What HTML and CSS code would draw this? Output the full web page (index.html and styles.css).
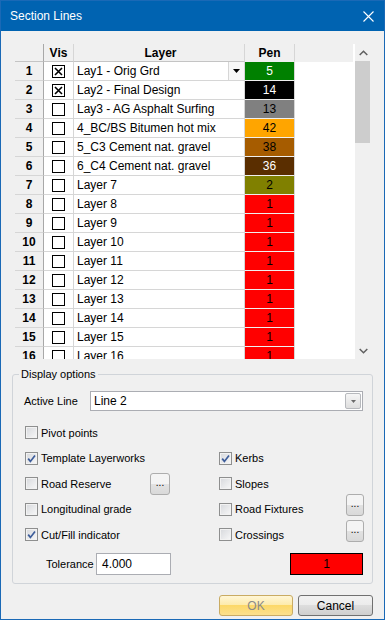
FILE: index.html
```html
<!DOCTYPE html>
<html>
<head>
  <title>Section Lines</title>
  <link rel="stylesheet" href="styles.css">
</head>
<body>
  <div class="window">
    <div class="titlebar">
      <span class="title">Section Lines</span>
      <svg class="close" width="11" height="11" viewBox="0 0 11 11"><path d="M0.5 0.5L10.5 10.5M10.5 0.5L0.5 10.5" stroke="#fff" stroke-width="1.1" fill="none"/></svg>
    </div>

    <div class="content">
      <div class="grid">
        <div class="grid-view">
          <div class="row head">
            <div class="num"></div>
            <div class="vis">Vis</div>
            <div class="layer">Layer</div>
            <div class="pen">Pen</div>
            <div class="rest"></div>
          </div>
          <div class="row">
            <div class="num">1</div>
            <div class="vis"><span class="box"><svg width="11" height="11" viewBox="0 0 11 11"><path d="M2 2L9 9M9 2L2 9" stroke="#000" stroke-width="1.6"/></svg></span></div>
            <div class="layer editing"><span class="cell-text">Lay1 - Orig Grd</span><span class="cell-btn"><svg width="7" height="4" viewBox="0 0 7 4"><path d="M0 0H7L3.5 4Z" fill="#000"/></svg></span></div>
            <div class="pen light" style="background:#008000">5</div>
            <div class="rest"></div>
          </div>
          <div class="row">
            <div class="num">2</div>
            <div class="vis"><span class="box"><svg width="11" height="11" viewBox="0 0 11 11"><path d="M2 2L9 9M9 2L2 9" stroke="#000" stroke-width="1.6"/></svg></span></div>
            <div class="layer">Lay2 - Final Design</div>
            <div class="pen light" style="background:#000000">14</div>
            <div class="rest"></div>
          </div>
          <div class="row">
            <div class="num">3</div>
            <div class="vis"><span class="box"></span></div>
            <div class="layer">Lay3 - AG Asphalt Surfing</div>
            <div class="pen" style="background:#808080">13</div>
            <div class="rest"></div>
          </div>
          <div class="row">
            <div class="num">4</div>
            <div class="vis"><span class="box"></span></div>
            <div class="layer">4_BC/BS Bitumen hot mix</div>
            <div class="pen" style="background:#ffa500">42</div>
            <div class="rest"></div>
          </div>
          <div class="row">
            <div class="num">5</div>
            <div class="vis"><span class="box"></span></div>
            <div class="layer">5_C3 Cement nat. gravel</div>
            <div class="pen" style="background:#a65c00">38</div>
            <div class="rest"></div>
          </div>
          <div class="row">
            <div class="num">6</div>
            <div class="vis"><span class="box"></span></div>
            <div class="layer">6_C4 Cement nat. gravel</div>
            <div class="pen light" style="background:#5a2e00">36</div>
            <div class="rest"></div>
          </div>
          <div class="row">
            <div class="num">7</div>
            <div class="vis"><span class="box"></span></div>
            <div class="layer">Layer 7</div>
            <div class="pen" style="background:#808000">2</div>
            <div class="rest"></div>
          </div>
          <div class="row">
            <div class="num">8</div>
            <div class="vis"><span class="box"></span></div>
            <div class="layer">Layer 8</div>
            <div class="pen" style="background:#ff0000">1</div>
            <div class="rest"></div>
          </div>
          <div class="row">
            <div class="num">9</div>
            <div class="vis"><span class="box"></span></div>
            <div class="layer">Layer 9</div>
            <div class="pen" style="background:#ff0000">1</div>
            <div class="rest"></div>
          </div>
          <div class="row">
            <div class="num">10</div>
            <div class="vis"><span class="box"></span></div>
            <div class="layer">Layer 10</div>
            <div class="pen" style="background:#ff0000">1</div>
            <div class="rest"></div>
          </div>
          <div class="row">
            <div class="num">11</div>
            <div class="vis"><span class="box"></span></div>
            <div class="layer">Layer 11</div>
            <div class="pen" style="background:#ff0000">1</div>
            <div class="rest"></div>
          </div>
          <div class="row">
            <div class="num">12</div>
            <div class="vis"><span class="box"></span></div>
            <div class="layer">Layer 12</div>
            <div class="pen" style="background:#ff0000">1</div>
            <div class="rest"></div>
          </div>
          <div class="row">
            <div class="num">13</div>
            <div class="vis"><span class="box"></span></div>
            <div class="layer">Layer 13</div>
            <div class="pen" style="background:#ff0000">1</div>
            <div class="rest"></div>
          </div>
          <div class="row">
            <div class="num">14</div>
            <div class="vis"><span class="box"></span></div>
            <div class="layer">Layer 14</div>
            <div class="pen" style="background:#ff0000">1</div>
            <div class="rest"></div>
          </div>
          <div class="row">
            <div class="num">15</div>
            <div class="vis"><span class="box"></span></div>
            <div class="layer">Layer 15</div>
            <div class="pen" style="background:#ff0000">1</div>
            <div class="rest"></div>
          </div>
          <div class="row">
            <div class="num">16</div>
            <div class="vis"><span class="box"></span></div>
            <div class="layer">Layer 16</div>
            <div class="pen" style="background:#ff0000">1</div>
            <div class="rest"></div>
          </div>
        </div>
        <div class="vscroll">
          <div class="arrow"><svg width="9" height="6" viewBox="0 0 9 6"><path d="M0.7 5L4.5 1.2L8.3 5" stroke="#606060" stroke-width="1.5" fill="none"/></svg></div>
          <div class="thumb"></div>
          <div class="track"></div>
          <div class="arrow"><svg width="9" height="6" viewBox="0 0 9 6"><path d="M0.7 1L4.5 4.8L8.3 1" stroke="#606060" stroke-width="1.5" fill="none"/></svg></div>
        </div>
      </div>

      <fieldset class="group">
        <legend>Display options</legend>
        <div class="active-line">
          <span class="field-label">Active Line</span>
          <div class="combo">
            <span class="combo-text">Line 2</span>
            <span class="combo-btn"><svg width="5" height="3" viewBox="0 0 5 3"><path d="M0 0H5L2.5 3Z" fill="#6a6a6a"/></svg></span>
          </div>
        </div>

        <div class="options">
          <label class="opt"><span class="cb"></span>Pivot points</label>
          <span></span><span></span><span></span>

          <label class="opt"><span class="cb"><svg width="11" height="11" viewBox="0 0 11 11"><path d="M2.2 5.6L4.4 8.4L9 2.4" stroke="#3d5d9a" stroke-width="1.7" fill="none"/></svg></span>Template Layerworks</label>
          <span></span>
          <label class="opt"><span class="cb"><svg width="11" height="11" viewBox="0 0 11 11"><path d="M2.2 5.6L4.4 8.4L9 2.4" stroke="#3d5d9a" stroke-width="1.7" fill="none"/></svg></span>Kerbs</label>
          <span></span>

          <label class="opt"><span class="cb"></span>Road Reserve</label>
          <span class="dots">...</span>
          <label class="opt"><span class="cb"></span>Slopes</label>
          <span></span>

          <label class="opt"><span class="cb"></span>Longitudinal grade</label>
          <span></span>
          <label class="opt"><span class="cb"></span>Road Fixtures</label>
          <span class="dots raised">...</span>

          <label class="opt"><span class="cb"><svg width="11" height="11" viewBox="0 0 11 11"><path d="M2.2 5.6L4.4 8.4L9 2.4" stroke="#3d5d9a" stroke-width="1.7" fill="none"/></svg></span>Cut/Fill indicator</label>
          <span></span>
          <label class="opt"><span class="cb"></span>Crossings</label>
          <span class="dots raised">...</span>
        </div>

        <div class="tol">
          <span class="tol-label">Tolerance</span>
          <div class="text-input">4.000</div>
          <div class="pen-box">1</div>
        </div>
      </fieldset>

      <div class="buttons">
        <button class="btn ok">OK</button>
        <button class="btn">Cancel</button>
      </div>
    </div>
  </div>
</body>
</html>
```

FILE: styles.css
```css
* {
  box-sizing: border-box;
}

body {
  margin: 0;
  font-family: "Liberation Sans", Arial, sans-serif;
  font-size: 12px;
  color: #000;
}

.window {
  width: 385px;
  height: 620px;
  border: 1px solid #1a69b6;
  background-color: #f0f0f0;
  display: flex;
  flex-direction: column;
}

.titlebar {
  height: 30px;
  background-color: #0063b1;
  color: #fff;
  display: flex;
  align-items: center;
  padding: 0 10px 0 9px;
}

.title {
  flex: 1;
  font-size: 12px;
}

.content {
  flex: 1;
  padding: 13px 11px 0 11px;
  display: flex;
  flex-direction: column;
}

/* layer grid */
.grid {
  height: 315px;
  margin: 0 1px 0 3px;
  background-color: #fff;
  display: flex;
}

.grid-view {
  flex: 1;
  overflow: hidden;
}

.row {
  display: flex;
  height: 19px;
}

.row > div {
  border-right: 1px solid #d6d6d6;
  border-bottom: 1px solid #d6d6d6;
  display: flex;
  align-items: center;
  white-space: nowrap;
  overflow: hidden;
}

.row.head {
  height: 18px;
}

.row.head > div {
  background-color: #f0f0f0;
  border-bottom-color: #c4c4c4;
  justify-content: center;
  font-weight: bold;
}

.num {
  width: 29px;
  justify-content: center;
  font-weight: bold;
  background-color: #f0f0f0;
  border-right-color: #a8a8a8 !important;
}

.vis {
  width: 30px;
  justify-content: center;
}

.layer {
  width: 171px;
  padding-left: 3px;
}

.layer.editing {
  padding-right: 0;
}

.cell-text {
  flex: 1;
}

.cell-btn {
  width: 16px;
  height: 18px;
  border-left: 1px solid #d6d6d6;
  background-color: #f7f7f7;
  display: flex;
  align-items: center;
  justify-content: center;
}

.pen {
  width: 50px;
  justify-content: center;
  border-bottom-color: #f0f0f0 !important;
}

.pen.light {
  color: #fff;
}

.row .rest {
  flex: 1;
  border: none;
}

.row.head .rest {
  border-right: 2px solid #fff;
}

.box {
  width: 13px;
  height: 13px;
  border: 1px solid #000;
  background-color: #fff;
  display: flex;
}

.vscroll {
  width: 17px;
  background-color: #f0f0f0;
  display: flex;
  flex-direction: column;
}

.vscroll .arrow {
  height: 17px;
  display: flex;
  align-items: center;
  justify-content: center;
}

.vscroll .thumb {
  height: 82px;
  margin: 0 2px 0 0;
  background-color: #cdcdcd;
}

.vscroll .track {
  flex: 1;
}

/* display options */
.group {
  margin: 8px 0 0;
  padding: 0 7px 8px 12px;
  border: 1px solid #d0d4d9;
  border-radius: 3px;
  min-width: 0;
  font-size: 11px;
}

.group legend {
  padding: 0 2px;
  margin-left: -6px;
  line-height: 14px;
}

.active-line {
  display: flex;
  align-items: center;
  height: 20px;
  margin-top: 10px;
}

.field-label {
  width: 66px;
  margin-left: -1px;
}

.combo {
  width: 273px;
  height: 20px;
  border: 1px solid #abadb3;
  background-color: #fff;
  display: flex;
  align-items: center;
  padding: 0 1px 0 3px;
  font-size: 12px;
}

.combo-text {
  flex: 1;
}

.combo-btn {
  width: 16px;
  height: 16px;
  border: 1px solid #b7b9bd;
  border-radius: 2px;
  background: linear-gradient(#f6f6f6, #dedede);
  display: flex;
  align-items: center;
  justify-content: center;
}

.options {
  display: grid;
  grid-template-columns: 125px 69px 127px 1fr;
  grid-template-rows: 25px 26px 25px 26px 25px;
  margin-top: 9px;
}

.opt {
  display: flex;
  align-items: center;
  gap: 3px;
  white-space: nowrap;
}

.cb {
  width: 13px;
  height: 13px;
  border: 1px solid #8e8f8f;
  background: linear-gradient(135deg, #d6d8dc, #f8f8f8);
  box-shadow: inset 0 0 0 1px #f2f2f2;
  display: flex;
  align-items: center;
  justify-content: center;
}

.cb svg {
  display: block;
}

.dots {
  width: 20px;
  height: 22px;
  align-self: center;
  border: 1px solid #adadad;
  border-radius: 3px;
  background: linear-gradient(#f4f4f4 50%, #e2e2e2 50%, #d9d9d9);
  display: flex;
  align-items: center;
  justify-content: center;
  font-size: 10px;
  line-height: 1;
  padding-bottom: 2px;
}

.dots.raised {
  width: 18px;
  align-self: start;
  margin-top: -2px;
}

.tol {
  display: flex;
  align-items: center;
  height: 22px;
  margin-top: 6px;
}

.tol-label {
  width: 50px;
  margin-left: 21px;
}

.text-input {
  width: 75px;
  height: 22px;
  border: 1px solid #abadb3;
  background-color: #fff;
  padding-left: 5px;
  display: flex;
  align-items: center;
  font-size: 12px;
}

.pen-box {
  width: 73px;
  height: 22px;
  margin-left: auto;
  margin-right: 2px;
  border: 1px solid #000;
  background-color: #ff0000;
  display: flex;
  align-items: center;
  justify-content: center;
  font-size: 12px;
}

/* dialog buttons */
.buttons {
  display: flex;
  justify-content: flex-end;
  gap: 5px;
  margin-top: 11px;
}

.btn {
  width: 75px;
  height: 21px;
  border: 1px solid #707070;
  border-radius: 3px;
  background: linear-gradient(#f2f2f2 0%, #ebebeb 50%, #dddddd 50%, #cfcfcf 100%);
  font-family: "Liberation Sans", Arial, sans-serif;
  font-size: 12px;
  color: #000;
  padding: 0;
}

.btn.ok {
  width: 74px;
  border-color: #c9ab63;
  background: linear-gradient(#fff6d6 0%, #fdeaa9 50%, #fcd869 50%, #fbe08e 100%);
  color: #8a8a8a;
}
```
